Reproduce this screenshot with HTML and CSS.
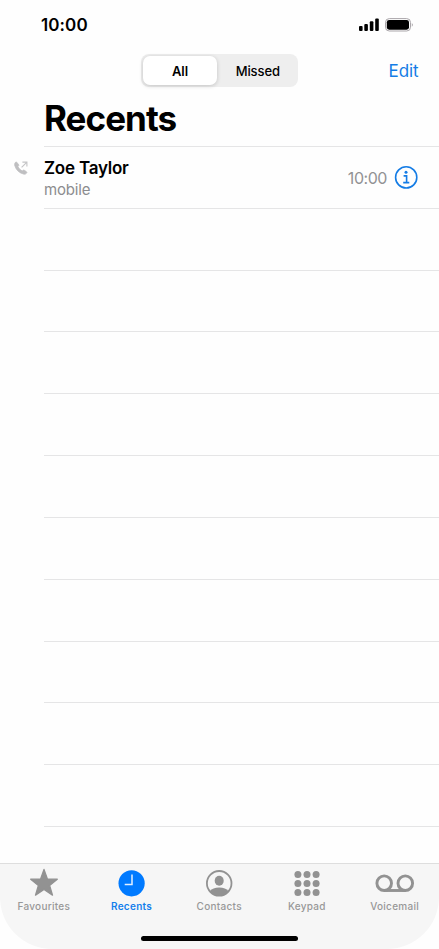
FILE: index.html
```html
<!DOCTYPE html>
<html lang="en">
<head>
<meta charset="utf-8">
<title>Recents</title>
<link rel="stylesheet" href="styles.css">
</head>
<body>
<div class="phone">
  <header class="status">
    <span class="clock">10:00</span>
    <svg class="indicators" width="56" height="16" viewBox="0 0 56 16">
      <rect x="1" y="9" width="3.6" height="5" rx="1"/>
      <rect x="6.3" y="7" width="3.6" height="7" rx="1"/>
      <rect x="11.8" y="4.2" width="3.6" height="9.8" rx="1"/>
      <rect x="17.2" y="1.5" width="3.6" height="12.5" rx="1"/>
      <rect x="27.5" y="1.6" width="25" height="12.4" rx="3.8" fill="none" stroke="#a9a5a9"/>
      <rect x="28.8" y="2.9" width="22.2" height="9.8" rx="2.4"/>
      <path d="M53.8 6 Q56 7.8 53.8 9.8Z" fill="#a9a5a9"/>
    </svg>
  </header>
  <nav class="toolbar">
    <div class="segments">
      <span class="segment selected">All</span>
      <span class="segment">Missed</span>
    </div>
    <a class="edit">Edit</a>
  </nav>
  <h1>Recents</h1>
  <main class="calls">
    <div class="row call">
      <svg class="outgoing" width="14" height="14" viewBox="0 0 14 14">
        <path d="M2.7 1.2 4.6 3.6Q5 4.3 4.5 4.9L3.9 5.7Q5.3 8.6 8.2 10L9 9.3Q9.7 8.8 10.4 9.3L12.5 10.8Q13.2 11.4 12.6 12.1 11.5 13.6 9.6 13.1 2.8 11.1.7 4.4.3 2.5 1.5 1.3 2.2.7 2.7 1.2Z" fill="#bfbfc1" stroke="#bfbfc1" stroke-width=".8"/>
        <path d="M7.6 6.4 12.7 1.3M8.4 1.1H12.9V5.6" fill="none" stroke="#c4c4c6" stroke-width="1.1"/>
      </svg>
      <div class="person">
        <span class="name">Zoe Taylor</span>
        <span class="kind">mobile</span>
      </div>
      <span class="time">10:00</span>
      <svg class="info" width="24" height="24" viewBox="0 0 24 24">
        <circle cx="12.2" cy="12.4" r="10.6" fill="none" stroke="#147ce5" stroke-width="1.6"/>
        <circle cx="12" cy="7.2" r="1.5" fill="#147ce5"/>
        <path d="M9.6 10.9H12.6V17.6M9.2 17.6H15.3" fill="none" stroke="#147ce5" stroke-width="1.6"/>
      </svg>
    </div>
    <div class="row"></div><div class="row"></div><div class="row"></div>
    <div class="row"></div><div class="row"></div><div class="row"></div>
    <div class="row"></div><div class="row"></div><div class="row"></div>
    <div class="row"></div>
  </main>
  <footer class="tabs">
    <div class="tab">
      <svg width="40" height="30" viewBox="0 0 40 30"><path d="M20 1.4 23.4 11 33.3 11.2 25.6 17.5 28.5 27.1 20 21.5 11.5 27.1 14.4 17.5 6.7 11.2 16.6 11Z" fill="#929292" stroke="#929292" stroke-width="1.3" stroke-linejoin="round"/></svg>
      <span>Favourites</span>
    </div>
    <div class="tab active">
      <svg width="40" height="30" viewBox="0 0 40 30"><circle cx="19.6" cy="15.3" r="13.1" fill="#007aff"/><path d="M20 6.5V16.5H12.7" fill="none" stroke="#e1efff" stroke-width="1.5"/></svg>
      <span>Recents</span>
    </div>
    <div class="tab">
      <svg width="40" height="30" viewBox="0 0 40 30"><circle cx="20.2" cy="15.3" r="12.3" fill="none" stroke="#929292" stroke-width="1.8"/><ellipse cx="20.2" cy="12.7" rx="4.5" ry="5" fill="#929292"/><path d="M10.9 23.2Q13.7 19.5 20.2 19.5T29.5 23.2Q25.7 27.8 20.2 27.8T10.9 23.2Z" fill="#929292"/></svg>
      <span>Contacts</span>
    </div>
    <div class="tab">
      <svg width="40" height="30" viewBox="0 0 40 30" fill="#929292"><circle cx="10.9" cy="6.4" r="3.5"/><circle cx="20" cy="6.4" r="3.5"/><circle cx="29.1" cy="6.4" r="3.5"/><circle cx="10.9" cy="15.4" r="3.5"/><circle cx="20" cy="15.4" r="3.5"/><circle cx="29.1" cy="15.4" r="3.5"/><circle cx="10.9" cy="24.4" r="3.5"/><circle cx="20" cy="24.4" r="3.5"/><circle cx="29.1" cy="24.4" r="3.5"/></svg>
      <span>Keypad</span>
    </div>
    <div class="tab">
      <svg width="40" height="30" viewBox="0 0 40 30"><g fill="none" stroke="#929292" stroke-width="2.9"><circle cx="9.2" cy="15.2" r="7.3"/><circle cx="30.3" cy="15.2" r="7.3"/><path d="M9.2 22.5H30.3"/></g></svg>
      <span>Voicemail</span>
    </div>
    <div class="home"></div>
  </footer>
</div>
</body>
</html>
```
FILE: styles.css
```css
* { box-sizing: border-box; }
body { margin: 0; background: #fff; font-family: Inter, sans-serif; color: #000; }
.phone { width: 439px; height: 949px; display: flex; flex-direction: column; background: #fefefe; overflow: hidden; }
.status { height: 54px; padding: 14px 25px 0 41px; display: flex; justify-content: space-between; align-items: flex-start; }
.clock { font-size: 17px; line-height: 22px; font-weight: 600; letter-spacing: .1px; }
.indicators { margin-top: 3px; }
.toolbar { height: 33px; display: grid; grid-template-columns: 141px 156.5px 1fr; align-items: center; }
.segments { grid-column: 2; height: 33px; padding: 2px; display: flex; border-radius: 8px; background: #eeeeee; }
.segment { flex: 1; padding: 0 0 0 3px; text-align: center; font-size: 13px; line-height: 30px; font-weight: 500; letter-spacing: -.1px; }
.segment.selected { flex: 0 0 74px; height: 29px; padding-left: 0; border-radius: 7px; background: #fff; box-shadow: 0 1px 4px rgba(0, 0, 0, .18); font-weight: 600; }
.edit { justify-self: end; margin-right: 20.5px; color: #147ce5; font-size: 17px; line-height: 22px; letter-spacing: -.1px; }
h1 { margin: 9px 0 0 44px; height: 50px; font-size: 35px; line-height: 44px; font-weight: 700; letter-spacing: -.95px; }
.calls { flex: none; }
.row { height: 61.82px; margin-left: 44px; border-top: 1px solid #e5e5e6; }
.row:last-child { height: 62.8px; border-bottom: 1px solid #e5e5e6; }
.call { margin-left: 0; padding: 0 20px 0 14px; display: flex; align-items: center; border-top: 0; background: linear-gradient(#e5e5e6, #e5e5e6) 44px 0 / 395px 1px no-repeat; }
.outgoing { margin: 0 16px 17px 0; }
.person { flex: 1; display: flex; flex-direction: column; padding-top: 5px; }
.name { font-size: 17px; line-height: 21px; font-weight: 600; letter-spacing: -.22px; }
.kind { margin-top: 1px; font-size: 15px; line-height: 20px; color: #8c8c8e; letter-spacing: -.15px; }
.time { padding-top: 2px; font-size: 16px; color: #929294; margin-right: 7px; letter-spacing: -.45px; }
.info { margin-right: 1px; }
.tabs { height: 86px; margin-top: auto; border-top: 1px solid #dedede; border-radius: 0 0 52px 52px; background: #f6f6f6; display: grid; grid-template: 75px 11px / repeat(5, 87.7px); }
.tab { display: flex; flex-direction: column; align-items: center; padding-top: 4px; color: #989898; font-size: 10px; line-height: 14px; font-weight: 500; letter-spacing: .28px; }
.tab span { margin-top: 1px; }
.tab.active { color: #147fec; font-weight: 600; }
.home { grid-column: 1 / -1; justify-self: center; align-self: start; width: 157px; height: 5px; margin-top: -3px; border-radius: 3px; background: #000; }
```
